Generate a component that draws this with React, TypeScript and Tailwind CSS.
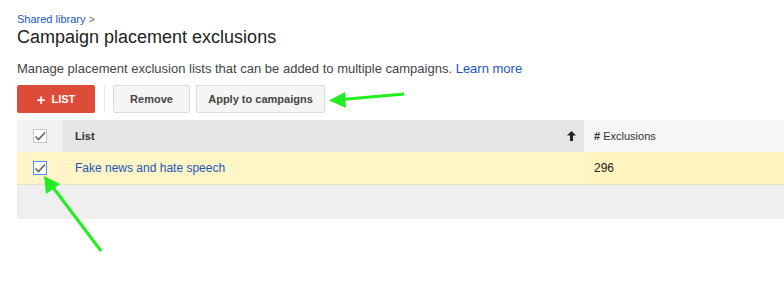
import React from "react";

function Check({ blue }: { blue?: boolean }) {
    return (
        <div
            className={`w-[14px] h-[14px] border bg-white flex items-center justify-center ${
                blue ? "border-[#4d90fe]" : "border-[#c6c6c6]"
            }`}
        >
            <svg width="12" height="11" viewBox="0 0 12 11">
                <path d="M1.5 5.5 L4.5 8.5 L11 1.5" fill="none" stroke="#666" strokeWidth="1.7" />
            </svg>
        </div>
    );
}

export default function App() {
    return (
        <div className="relative w-[784px] h-[295px] bg-white overflow-hidden font-['Liberation_Sans',Arial,sans-serif]">
            <div className="pl-[17px] pt-[13px]">
                {/* Breadcrumb + title */}
                <div className="text-[11px] leading-[13px] text-[#2255bb]">
                    Shared library <span className="text-[#666]">&gt;</span>
                </div>
                <h1 className="text-[18px] leading-[22px] text-[#222]">Campaign placement exclusions</h1>

                <p className="mt-[13px] text-[13px] leading-[16px] text-[#444]">
                    Manage placement exclusion lists that can be added to multiple campaigns.{" "}
                    <span className="text-[#2255bb]">Learn more</span>
                </p>

                {/* Toolbar */}
                <div className="mt-[8px] flex items-center h-[28px]">
                    <button className="w-[78px] h-[28px] rounded-[2px] bg-[#dd4b39] text-white text-[11px] font-bold flex items-center justify-center gap-[6px]">
                        <span className="text-[15px] leading-none">+</span>
                        LIST
                    </button>
                    <div className="w-px h-[28px] bg-[#ebebeb] ml-[9px] mr-[8px]" />
                    <button className="w-[77px] h-[28px] rounded-[2px] bg-[#f5f5f5] border border-[#dcdcdc] text-[#444] text-[11px] font-bold">
                        Remove
                    </button>
                    <button className="ml-[6px] w-[129px] h-[28px] rounded-[2px] bg-[#f5f5f5] border border-[#dcdcdc] text-[#444] text-[11px] font-bold">
                        Apply to campaigns
                    </button>
                </div>

                {/* Table */}
                <div className="mt-[7px]">
                    <div className="flex h-[32px] text-[11px] font-bold text-[#333]">
                        <div className="w-[46px] bg-[#f1f1f1] flex items-center justify-center">
                            <Check />
                        </div>
                        <div className="w-[521px] bg-[#e5e5e5] flex items-center justify-between pl-[12px] pr-[8px]">
                            <span>List</span>
                            <svg width="9" height="10" viewBox="0 0 9 10">
                                <path d="M4.5 0 L9 4.5 L6 4.5 L6 10 L3 10 L3 4.5 L0 4.5 Z" fill="#222" />
                            </svg>
                        </div>
                        <div className="flex-1 bg-[#f6f6f6] flex items-center pl-[10px] font-normal text-[11px] text-[#333]">
                            <span className="font-bold">#</span>&nbsp;Exclusions
                        </div>
                    </div>
                    <div className="flex h-[33px] bg-[#fff5c6] border-b border-[#e6e0c4] text-[12px]">
                        <div className="w-[46px] flex items-center justify-center">
                            <Check blue />
                        </div>
                        <div className="w-[521px] flex items-center pl-[12px] text-[#2255bb]">
                            Fake news and hate speech
                        </div>
                        <div className="flex-1 flex items-center pl-[10px] bg-[#fff4c0] text-[#222]">296</div>
                    </div>
                    <div className="h-[34px] bg-[#efefef]" />
                </div>
            </div>

            {/* Annotation arrows */}
            <svg className="absolute inset-0 pointer-events-none" width="784" height="295">
                <line x1="404" y1="94" x2="342" y2="99.5" stroke="#22ee22" strokeWidth="3" />
                <polygon points="329,100.5 345,92 346,108" fill="#22ee22" />
                <line x1="101" y1="251" x2="52" y2="186" stroke="#22ee22" strokeWidth="3" />
                <polygon points="44,176 46,194 60,184" fill="#22ee22" />
            </svg>
        </div>
    );
}
